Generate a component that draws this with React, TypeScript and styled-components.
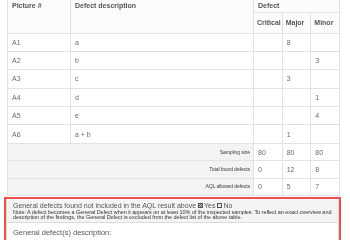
import React from "react";
import styled, { createGlobalStyle } from "styled-components";

const GlobalStyle = createGlobalStyle`
  html, body { margin: 0; padding: 0; background: #ffffff; }
  body {
    font-family: "Liberation Sans", Arial, Helvetica, sans-serif;
    -webkit-font-smoothing: antialiased;
  }
`;

const Page = styled.div`
  width: 350px;
  padding: 0 0 0 7px;
  box-sizing: border-box;
  will-change: transform;
`;

const Table = styled.table`
  border-collapse: collapse;
  width: 333px;
  table-layout: fixed;
  color: #666;
`;

const Th = styled.th<{ $w?: number; $h?: number }>`
  ${(p) => (p.$w ? `width: ${p.$w}px;` : "")}
  ${(p) => (p.$h ? `height: ${p.$h}px;` : "")}
  border: 1px solid #e2e2e2;
  border-top: none;
  background: #fcfcfc;
  color: #555;
  font-size: 7px;
  font-weight: bold;
  line-height: 9px;
  text-align: left;
  vertical-align: top;
  padding: 1px 4px 0 4px;
  box-sizing: border-box;
`;

const SubTh = styled(Th)`
  vertical-align: middle;
  padding: 0 3px;
`;

const Td = styled.td<{ $h?: number }>`
  height: ${(p) => p.$h ?? 18.4}px;
  border: 1px solid #e2e2e2;
  font-size: 7px;
  line-height: 9px;
  padding: 0 4px;
  vertical-align: middle;
  color: #6a6a6a;
  box-sizing: border-box;
`;

const LabelTd = styled(Td)`
  background: #f3f3f3;
  text-align: right;
  font-size: 5.2px;
  letter-spacing: -0.15px;
  padding-right: 3px;
  color: #444;
`;

const AlertBox = styled.div`
  margin: 1px 9px 0 -3px;
  border: 2px solid #ef4f4f;
  background: #fff;
`;

const Inner = styled.div`
  border: 1px solid #dcdcdc;
  border-top: none;
`;

const Heading = styled.div`
  background: #f4f4f4;
  border-bottom: 1px solid #dcdcdc;
  padding: 2px 6px 2px 6px;
`;

const Title = styled.div`
  display: flex;
  align-items: center;
  font-size: 7px;
  line-height: 9px;
  color: #555;
  letter-spacing: 0;
  white-space: nowrap;
`;

const Box = styled.span<{ $checked?: boolean }>`
  display: inline-flex;
  width: 5px;
  height: 5px;
  margin: 0 1px 0 2px;
  border: 1px solid #555;
  background: ${(p) => (p.$checked ? "#666" : "#e8e8e8")};
  box-sizing: border-box;
  align-items: center;
  justify-content: center;
`;

const Note = styled.div`
  font-size: 5.5px;
  line-height: 5px;
  color: #333;
  letter-spacing: -0.05px;
  white-space: nowrap;
`;

const Body = styled.div`
  padding: 5px 6px 4px;
  font-size: 7.5px;
  line-height: 9px;
  color: #555;
`;

const rows = [
  ["A1", "a", "", "8", ""],
  ["A2", "b", "", "", "3"],
  ["A3", "c", "", "3", ""],
  ["A4", "d", "", "", "1"],
  ["A5", "e", "", "", "4"],
  ["A6", "a + b", "", "1", ""],
];

const summary = [
  ["Sampling size", "80", "80", "80"],
  ["Total found defects", "0", "12", "8"],
  ["AQL allowed defects", "0", "5", "7"],
];

export default function App() {
  return (
    <>
      <GlobalStyle />
      <Page>
        <Table>
          <thead>
            <tr>
              <Th rowSpan={2} $w={63}>Picture #</Th>
              <Th rowSpan={2} $w={183}>Defect description</Th>
              <Th colSpan={3} $h={12}>Defect</Th>
            </tr>
            <tr>
              <SubTh $w={32} $h={21}>Critical</SubTh>
              <SubTh $w={27} $h={21}>Major</SubTh>
              <SubTh $h={21}>Minor</SubTh>
            </tr>
          </thead>
          <tbody>
            {rows.map((r) => (
              <tr key={r[0]}>
                {r.map((c, i) => (
                  <Td key={i}>{c}</Td>
                ))}
              </tr>
            ))}
            {summary.map((s) => (
              <tr key={s[0]}>
                <LabelTd colSpan={2} $h={17.4}>{s[0]}</LabelTd>
                <Td $h={17.4}>{s[1]}</Td>
                <Td $h={17.4}>{s[2]}</Td>
                <Td $h={17.4}>{s[3]}</Td>
              </tr>
            ))}
          </tbody>
        </Table>
        <AlertBox>
          <Inner>
            <Heading>
              <Title>
                General defects found not included in the AQL result above
                <Box $checked>
                  <svg width="3" height="3" viewBox="0 0 3 3">
                    <path d="M0 0L3 3M3 0L0 3" stroke="#ddd" strokeWidth="0.8" />
                  </svg>
                </Box>
                Yes
                <Box />
                {" "}No
              </Title>
              <Note>
                Note: A defect becomes a General Defect when it appears on at least 10% of the inspected samples. To reflect an exact overview and
                <br />
                description of the findings, the General Defect is excluded from the defect list of the above table.
              </Note>
            </Heading>
            <Body>General defect(s) description:</Body>
          </Inner>
        </AlertBox>
      </Page>
    </>
  );
}
